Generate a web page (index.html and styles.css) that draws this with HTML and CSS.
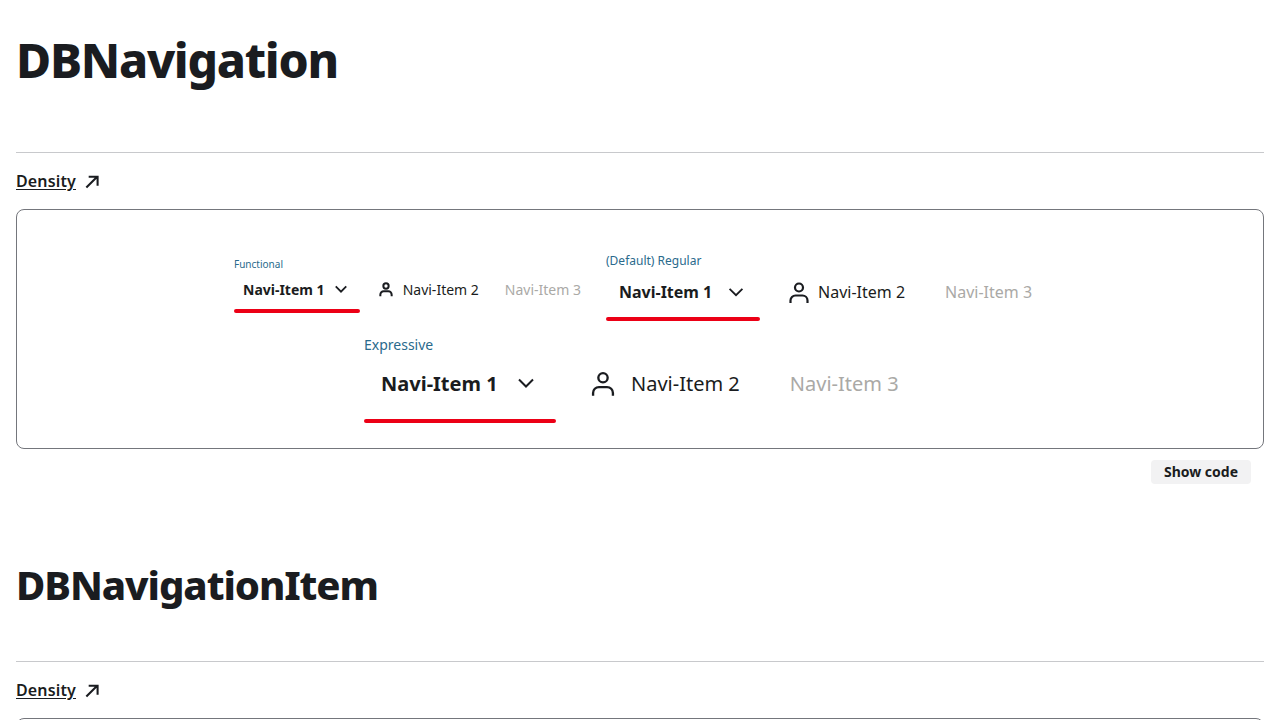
FILE: index.html
```html
<!DOCTYPE html>
<html lang="en">
<head>
    <meta charset="UTF-8">
    <meta name="viewport" content="width=device-width, initial-scale=1.0">
    <title>DBNavigation</title>
    <link rel="stylesheet" href="styles.css">
</head>
<body>

<svg class="icon-defs" width="0" height="0" aria-hidden="true">
    <symbol id="chevron" viewBox="0 0 24 24">
        <path d="M5 8.5l7 7 7-7" fill="none" stroke="currentColor"/>
    </symbol>
    <symbol id="person" viewBox="0 0 24 24">
        <circle cx="12" cy="7.5" r="4" fill="none" stroke="currentColor"/>
        <path d="M3.5 23v-2.5a5 5 0 0 1 5-5h7a5 5 0 0 1 5 5V23" fill="none" stroke="currentColor"/>
    </symbol>
    <symbol id="arrow" viewBox="0 0 16 16">
        <path d="M2.5 14.5L13.5 3.5M5 3h9.5v9.5" fill="none" stroke="currentColor" stroke-width="2.2"/>
    </symbol>
</svg>

<section class="doc-section">
    <h1 class="title">DBNavigation</h1>
    <hr class="rule">
    <a class="density-link" href="#"><span>Density</span><svg class="arrow-icon"><use href="#arrow"/></svg></a>

    <div class="example-box">
        <div class="variant variant-functional">
            <p class="variant-label">Functional</p>
            <nav class="nav">
                <a class="nav-item active" href="#">Navi-Item 1<svg class="chevron"><use href="#chevron"/></svg></a>
                <a class="nav-item" href="#"><svg class="person"><use href="#person"/></svg>Navi-Item 2</a>
                <a class="nav-item disabled" href="#">Navi-Item 3</a>
            </nav>
        </div>
        <div class="variant variant-regular">
            <p class="variant-label">(Default) Regular</p>
            <nav class="nav">
                <a class="nav-item active" href="#">Navi-Item 1<svg class="chevron"><use href="#chevron"/></svg></a>
                <a class="nav-item" href="#"><svg class="person"><use href="#person"/></svg>Navi-Item 2</a>
                <a class="nav-item disabled" href="#">Navi-Item 3</a>
            </nav>
        </div>
        <div class="variant variant-expressive">
            <p class="variant-label">Expressive</p>
            <nav class="nav">
                <a class="nav-item active" href="#">Navi-Item 1<svg class="chevron"><use href="#chevron"/></svg></a>
                <a class="nav-item" href="#"><svg class="person"><use href="#person"/></svg>Navi-Item 2</a>
                <a class="nav-item disabled" href="#">Navi-Item 3</a>
            </nav>
        </div>
    </div>

    <div class="code-row"><button class="show-code">Show code</button></div>
</section>

<section class="doc-section">
    <h2 class="title title-small">DBNavigationItem</h2>
    <hr class="rule">
    <a class="density-link" href="#"><span>Density</span><svg class="arrow-icon"><use href="#arrow"/></svg></a>
    <div class="example-box"></div>
</section>

</body>
</html>
```

FILE: styles.css
```css
body {
    margin: 0;
    padding: 0 16px;
    height: 720px;
    overflow: hidden;
    background: #fff;
    color: #1a1c20;
    font-family: "Noto Sans", sans-serif;
}

.icon-defs {
    position: absolute;
}

/* Headings */
.title {
    margin: 0;
    height: 126px;
    padding-top: 26px;
    font-size: 48px;
    line-height: 68px;
    font-weight: 800;
    letter-spacing: -1.3px;
}

.title-small {
    height: 105px;
    padding-top: 0;
    font-size: 40px;
    line-height: 58px;
    letter-spacing: -1.08px;
}

.rule {
    margin: 0;
    border: 0;
    border-top: 1px solid #c8c9cc;
}

.density-link {
    display: flex;
    align-items: center;
    gap: 8px;
    height: 24px;
    margin-top: 16px;
    color: #1a1c20;
    font-size: 16px;
    font-weight: 600;
    letter-spacing: 0.15px;
    text-decoration: none;
}

.density-link span {
    text-decoration: underline;
    text-underline-offset: 2px;
}

.arrow-icon {
    width: 15px;
    height: 15px;
}

/* Example box */
.example-box {
    display: flex;
    flex-wrap: wrap;
    justify-content: center;
    align-items: flex-start;
    align-content: flex-start;
    gap: 23px 16px;
    box-sizing: border-box;
    height: 240px;
    margin-top: 16px;
    padding: 43px 16px 0;
    border: 1px solid #74767c;
    border-radius: 8px;
}

.variant-label {
    margin: 0;
    color: #2a6a8c;
}

.nav {
    display: flex;
    align-items: flex-start;
}

.nav-item {
    display: flex;
    align-items: center;
    color: #1a1c20;
    text-decoration: none;
    white-space: nowrap;
}

.nav-item svg {
    stroke-width: 2;
}

.nav-item.active {
    position: relative;
    font-weight: 700;
}

.nav-item.disabled {
    color: #aaa9a6;
}

.active::after {
    content: "";
    position: absolute;
    left: 0;
    right: 0;
    height: 4px;
    background: #ec0016;
    border-radius: 2px;
}

/* Functional */
.variant-functional {
    width: 356px;
    margin-top: 4px;
}

.variant-functional .variant-label {
    font-size: 10px;
    line-height: 14px;
}

.variant-functional .nav-item {
    height: 32px;
    padding: 0 9px;
    margin-top: 2px;
    font-size: 14px;
}

.variant-functional .nav-item.active {
    width: 126px;
    box-sizing: border-box;
    justify-content: space-between;
    padding-right: 10px;
    margin-right: 9px;
}

.variant-functional .nav-item.active::after {
    bottom: -8px;
}

.variant-functional .chevron {
    width: 18px;
    height: 18px;
    stroke-width: 2.4;
}

.variant-functional .person {
    width: 16px;
    height: 16px;
    margin-right: 9px;
    stroke-width: 3;
}

.variant-functional .nav-item.disabled {
    margin-left: 8px;
}

/* Regular */
.variant-regular {
    width: 440px;
}

.variant-regular .variant-label {
    font-size: 12px;
    line-height: 16px;
}

.variant-regular .nav-item {
    height: 40px;
    padding: 0 13px;
    margin-top: 3px;
    font-size: 16px;
}

.variant-regular .nav-item.active {
    width: 154px;
    box-sizing: border-box;
    justify-content: space-between;
    padding-right: 13px;
    margin-right: 14px;
}

.variant-regular .nav-item.active::after {
    bottom: -9px;
}

.variant-regular .chevron {
    width: 22px;
    height: 22px;
}

.variant-regular .person {
    width: 24px;
    height: 24px;
    margin-right: 7px;
    stroke-width: 2.2;
}

.variant-regular .nav-item.disabled {
    margin-left: 14px;
}

/* Expressive */
.variant-expressive {
    width: 552px;
}

.variant-expressive .variant-label {
    font-size: 14px;
    line-height: 20px;
}

.variant-expressive .nav-item {
    height: 48px;
    padding: 0 17px;
    margin-top: 4px;
    font-size: 20px;
}

.variant-expressive .nav-item.active {
    width: 192px;
    box-sizing: border-box;
    justify-content: space-between;
    padding-right: 18px;
    margin-right: 16px;
}

.variant-expressive .nav-item.active::after {
    bottom: -16px;
}

.variant-expressive .chevron {
    width: 24px;
    height: 24px;
}

.variant-expressive .person {
    width: 28px;
    height: 28px;
    margin-right: 14px;
}

.variant-expressive .nav-item.disabled {
    margin-left: 16px;
}

/* Show code */
.code-row {
    display: flex;
    justify-content: flex-end;
    height: 96px;
    padding: 11px 13px 0 0;
}

.show-code {
    width: 100px;
    height: 24px;
    padding: 0 0 2px;
    border: 0;
    border-radius: 4px;
    background: #f2f2f3;
    color: #1a1c20;
    font-family: inherit;
    font-size: 14px;
    font-weight: 700;
}
```
